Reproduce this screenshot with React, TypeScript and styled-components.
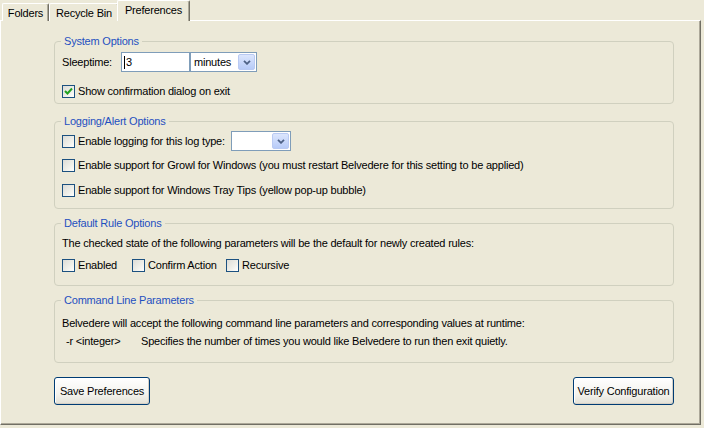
import React from 'react';
import styled, { createGlobalStyle } from 'styled-components';

const Global = createGlobalStyle`
  html, body { margin: 0; padding: 0; background: #ECE9D8; }
  body {
    font-family: "Liberation Sans", Arial, sans-serif;
    font-size: 11px;
    letter-spacing: -0.2px;
    color: #000;
  }
  #root { width: 704px; height: 428px; }
`;

const Window = styled.div`
  width: 704px;
  height: 428px;
  background: #ECE9D8;
  display: flex;
  flex-direction: column;
  overflow: hidden;
`;

const TabStrip = styled.div`
  display: flex;
  align-items: flex-end;
  height: 21px;
  padding-left: 2px;
  margin-bottom: -1px;
  position: relative;
  z-index: 1;
`;

const Tab = styled.div<{ $w: number; $active?: boolean }>`
  box-sizing: border-box;
  width: ${p => p.$w}px;
  height: ${p => (p.$active ? 21 : 18)}px;
  margin: 0 ${p => (p.$active ? -2 : 0)}px;
  padding-top: 3px;
  text-align: center;
  background: #ECE9D8;
  border-top: 1px solid #fff;
  border-left: 1px solid #fff;
  border-right: 1px solid #716F64;
  border-radius: 2px 2px 0 0;
  box-shadow: inset -1px 0 0 #ACA899;
  position: relative;
  z-index: ${p => (p.$active ? 2 : 1)};
  line-height: 13px;
`;

const Panel = styled.div`
  box-sizing: border-box;
  width: 701px;
  height: 405px;
  border-top: 1px solid #fff;
  border-left: 1px solid #fff;
  border-right: 1px solid #716F64;
  border-bottom: 1px solid #716F64;
  box-shadow: inset -1px -1px 0 #ACA899;
  padding: 14px 0 0 53px;
  display: flex;
  flex-direction: column;
`;

const Group = styled.fieldset<{ $h: number; $mt: number }>`
  box-sizing: border-box;
  width: 620px;
  height: ${p => p.$h}px;
  margin: ${p => p.$mt}px 0 0 0;
  padding: 0 8px 0 7px;
  border: 1px solid #D0D0BF;
  border-radius: 4px;
  min-width: 0;
  display: flex;
  flex-direction: column;
`;

const Legend = styled.legend`
  color: #1F50C0;
  padding: 0 3px;
  margin-left: -1px;
  line-height: 13px;
  font-size: 11px;
`;

const Row = styled.div<{ $mt: number; $h?: number }>`
  display: flex;
  align-items: center;
  height: ${p => p.$h ?? 16}px;
  margin-top: ${p => p.$mt}px;
  white-space: nowrap;
`;

const Label = styled.span<{ $w?: number }>`
  width: ${p => (p.$w ? `${p.$w}px` : 'auto')};
  flex: none;
`;

const TextInput = styled.div`
  box-sizing: border-box;
  width: 69px;
  height: 20px;
  background: #fff;
  border: 1px solid #7F9DB9;
  display: flex;
  align-items: center;
  padding-left: 2px;
`;

const Caret = styled.span`
  display: inline-block;
  width: 1px;
  height: 13px;
  background: #000;
  margin-right: 1px;
`;

const Combo = styled.div<{ $w: number }>`
  box-sizing: border-box;
  width: ${p => p.$w}px;
  height: 20px;
  background: #fff;
  border: 1px solid #7F9DB9;
  display: flex;
  align-items: center;
  justify-content: space-between;
  padding: 1px 1px 1px 3px;
`;

const ComboButton = styled.div`
  box-sizing: border-box;
  width: 17px;
  height: 16px;
  border: 1px solid #B9CAF3;
  border-radius: 2px;
  background: linear-gradient(#DCE6FD, #B7CBF8);
  display: flex;
  align-items: center;
  justify-content: center;
`;

const CheckItem = styled.label<{ $w?: number }>`
  display: flex;
  align-items: center;
  gap: 3px;
  width: ${p => (p.$w ? `${p.$w}px` : 'auto')};
  flex: none;
`;

const Box = styled.span`
  box-sizing: border-box;
  width: 13px;
  height: 13px;
  border: 1px solid #1C5180;
  background: linear-gradient(135deg, #DCDCD7 0%, #F0F0EA 60%, #FFFFFF 100%);
  display: flex;
  align-items: center;
  justify-content: center;
  flex: none;
`;

const ParamRow = styled.div<{ $mt: number }>`
  display: grid;
  grid-template-columns: 75px auto;
  padding-left: 4px;
  margin-top: ${p => p.$mt}px;
  height: 14px;
  align-items: center;
  white-space: nowrap;
`;

const ButtonBar = styled.div`
  width: 620px;
  margin-top: 14px;
  display: flex;
  justify-content: space-between;
`;

const Button = styled.button<{ $w: number }>`
  box-sizing: border-box;
  width: ${p => p.$w}px;
  height: 28px;
  border: 1px solid #003C74;
  border-radius: 3px;
  background: linear-gradient(#FFFFFF 0%, #F4F3EE 60%, #E3E1D6 100%);
  box-shadow: inset -1px -1px 0 #D6D0C5, inset 1px 1px 0 #fff;
  font-family: "Liberation Sans", Arial, sans-serif;
  font-size: 11px;
  letter-spacing: -0.2px;
  color: #000;
  padding: 0;
`;

const Chevron = () => (
  <svg width="8" height="5" viewBox="0 0 8 5">
    <path d="M1 0.8 L4 3.8 L7 0.8" stroke="#4D6185" strokeWidth="1.8" fill="none" />
  </svg>
);

const Check = ({ checked }: { checked?: boolean }) => (
  <Box>
    {checked && (
      <svg width="9" height="9" viewBox="0 0 9 9">
        <path d="M1 4 L3.5 6.5 L8 1.5" stroke="#21A121" strokeWidth="2" fill="none" />
      </svg>
    )}
  </Box>
);

export default function App() {
  return (
    <Window>
      <Global />
      <TabStrip>
        <Tab $w={47}>Folders</Tab>
        <Tab $w={70}>Recycle Bin</Tab>
        <Tab $w={73} $active>Preferences</Tab>
      </TabStrip>
      <Panel>
        <Group $h={69} $mt={0}>
          <Legend>System Options</Legend>
          <Row $mt={4} $h={20}>
            <Label $w={59}>Sleeptime:</Label>
            <TextInput><Caret />3</TextInput>
            <Combo $w={67}>
              minutes
              <ComboButton><Chevron /></ComboButton>
            </Combo>
          </Row>
          <Row $mt={11}>
            <CheckItem><Check checked />Show confirmation dialog on exit</CheckItem>
          </Row>
        </Group>

        <Group $h={94} $mt={11}>
          <Legend>Logging/Alert Options</Legend>
          <Row $mt={3} $h={20}>
            <CheckItem $w={169}><Check />Enable logging for this log type:</CheckItem>
            <Combo $w={60}>
              <span />
              <ComboButton><Chevron /></ComboButton>
            </Combo>
          </Row>
          <Row $mt={6}>
            <CheckItem><Check />Enable support for Growl for Windows (you must restart Belvedere for this setting to be applied)</CheckItem>
          </Row>
          <Row $mt={9}>
            <CheckItem><Check />Enable support for Windows Tray Tips (yellow pop-up bubble)</CheckItem>
          </Row>
        </Group>

        <Group $h={69} $mt={8}>
          <Legend>Default Rule Options</Legend>
          <Row $mt={6} $h={14}>
            The checked state of the following parameters will be the default for newly created rules:
          </Row>
          <Row $mt={7}>
            <CheckItem $w={70}><Check />Enabled</CheckItem>
            <CheckItem $w={94}><Check />Confirm Action</CheckItem>
            <CheckItem><Check />Recursive</CheckItem>
          </Row>
        </Group>

        <Group $h={69} $mt={8}>
          <Legend>Command Line Parameters</Legend>
          <Row $mt={9} $h={14}>
            Belvedere will accept the following command line parameters and corresponding values at runtime:
          </Row>
          <ParamRow $mt={4}>
            <span>-r &lt;integer&gt;</span>
            <span>Specifies the number of times you would like Belvedere to run then exit quietly.</span>
          </ParamRow>
        </Group>

        <ButtonBar>
          <Button $w={96}>Save Preferences</Button>
          <Button $w={101}>Verify Configuration</Button>
        </ButtonBar>
      </Panel>
    </Window>
  );
}
